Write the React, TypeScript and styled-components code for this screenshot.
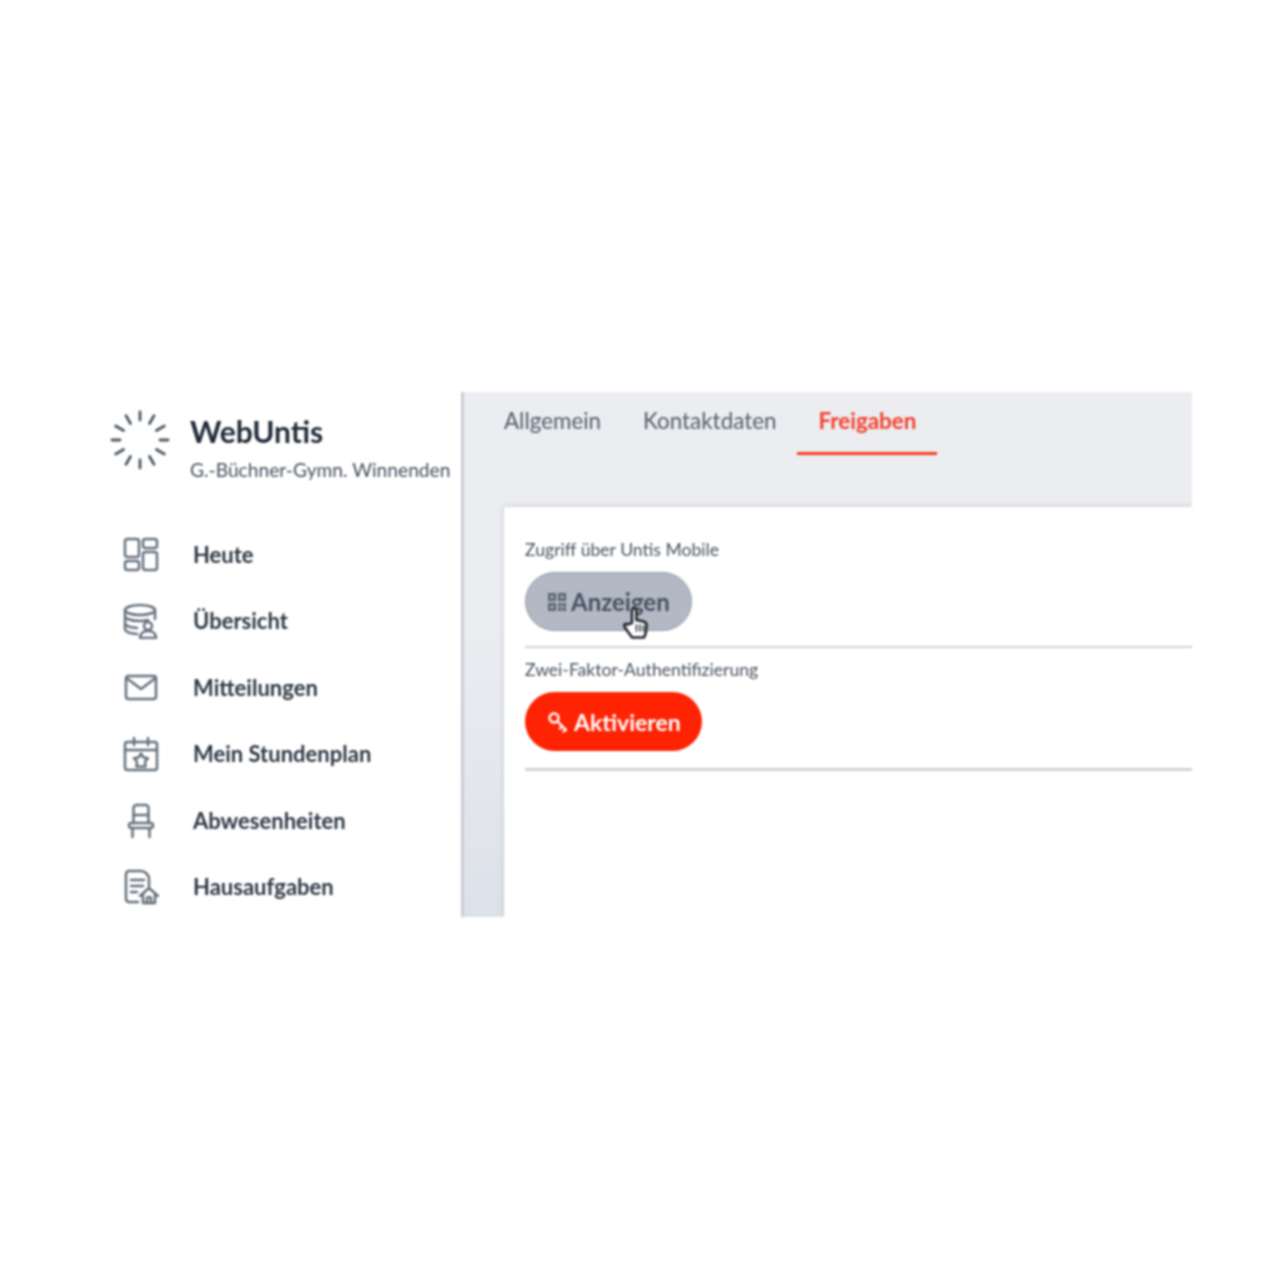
import React from 'react';
import styled, { createGlobalStyle } from 'styled-components';

const GlobalStyle = createGlobalStyle`
  html, body {
    margin: 0;
    padding: 0;
    background: #ffffff;
  }
  body {
    font-family: Lato, "Liberation Sans", sans-serif;
  }
`;

const Page = styled.div`
  width: 1280px;
  height: 1280px;
  box-sizing: border-box;
  padding: 392px 88px 0 0;
  background: #fff;
`;
const Frame = styled.div`
  display: flex;
  height: 525px;
  filter: blur(0.8px);
`;
const Sidebar = styled.div`
  width: 461px;
  flex-shrink: 0;
  box-sizing: border-box;
  padding: 18px 0 0 110px;
`;
const Brand = styled.div`
  display: flex;
  gap: 20px;
`;
const BrandText = styled.div`
  display: flex;
  flex-direction: column;
`;
const BrandTitle = styled.div`
  font-size: 30px;
  line-height: 42px;
  font-weight: 700;
  color: #1f2a36;
`;
const BrandSchool = styled.div`
  margin-top: 6px;
  font-size: 19.2px;
  line-height: 24px;
  color: #434f5c;
  white-space: nowrap;
`;
const Nav = styled.div`
  display: flex;
  flex-direction: column;
  margin-top: 39px;
  padding-left: 13px;
`;
const NavItem = styled.div`
  display: flex;
  align-items: center;
  gap: 34px;
  height: 66.5px;
  font-size: 22px;
  font-weight: 700;
  color: #2c3743;
  white-space: nowrap;
`;
const NavIcon = styled.svg`
  width: 36px;
  height: 36px;
  flex-shrink: 0;
  margin-top: 1px;
  fill: none;
  stroke: #65717d;
  stroke-width: 2.5;
  stroke-linecap: round;
  stroke-linejoin: round;
`;
const Main = styled.div`
  flex: 1;
  display: flex;
  flex-direction: column;
  min-width: 0;
  overflow: hidden;
  background: linear-gradient(to bottom, #ebedf1 0, #ebedf1 45%, #dde1e9 100%);
  border-left: 3px solid #c9cdd5;
`;
const Tabs = styled.div`
  display: flex;
  height: 115px;
  padding-left: 19px;
  box-sizing: border-box;
  align-items: flex-start;
`;
const Tab = styled.div<{ $active?: boolean }>`
  box-sizing: border-box;
  height: 63px;
  padding: 14px 21px 0;
  font-size: 22.4px;
  line-height: 30px;
  color: ${(p) => (p.$active ? '#f4402c' : '#525d69')};
  font-weight: ${(p) => (p.$active ? 700 : 400)};
  border-bottom: 3px solid ${(p) => (p.$active ? '#fa3a1e' : 'transparent')};
`;
const Card = styled.div`
  flex: 1;
  margin-left: 40px;
  background: #fff;
  box-sizing: border-box;
  padding: 32px 0 0 21px;
  box-shadow: -1px -1px 4px rgba(150, 158, 172, 0.35);
`;
const Section = styled.div<{ $thin?: boolean }>`
  border-bottom: ${(p) => (p.$thin ? 2 : 3)}px solid #d0d2d6;
  padding-bottom: ${(p) => (p.$thin ? 15 : 17)}px;
  margin-bottom: 11px;
`;
const SectionLabel = styled.div`
  font-size: 17.6px;
  line-height: 22px;
  color: #47525e;
  margin-bottom: 11px;
`;
const PillButton = styled.div<{ $variant: 'muted' | 'danger' }>`
  position: relative;
  display: inline-flex;
  align-items: center;
  justify-content: center;
  gap: 5px;
  height: 59px;
  box-sizing: border-box;
  padding: 0 21px 0 22px;
  border-radius: 30px;
  font-size: ${(p) => (p.$variant === 'danger' ? 23 : 24)}px;
  font-weight: 700;
  vertical-align: top;
  color: ${(p) => (p.$variant === 'danger' ? '#ffffff' : '#465160')};
  background: ${(p) => (p.$variant === 'danger' ? '#fe2303' : '#b2b8c4')};
  border: ${(p) => (p.$variant === 'danger' ? 'none' : '1px solid #959ca9')};
`;
const HandCursor = styled.svg`
  position: absolute;
  left: 97px;
  top: 33px;
  width: 26px;
  height: 34px;
`;

const Logo = () => {
  const rays = Array.from({ length: 12 }, (_, i) => i * 30);
  return (
    <svg width="60" height="60" viewBox="0 0 60 60" style={{ flexShrink: 0 }}>
      {rays.map((deg) => (
        <line
          key={deg}
          x1="30"
          y1="2"
          x2="30"
          y2={deg % 90 === 0 ? '10' : '11'}
          stroke="#4c5763"
          strokeWidth="2.8"
          strokeLinecap="round"
          transform={`rotate(${deg} 30 30)`}
        />
      ))}
    </svg>
  );
};

const IconToday = () => (
  <NavIcon viewBox="0 0 36 36">
    <rect x="2" y="2" width="14" height="18" rx="2.5" />
    <rect x="20" y="2" width="14" height="9" rx="2.5" />
    <rect x="2" y="24" width="14" height="9" rx="2.5" />
    <rect x="20" y="15" width="14" height="18" rx="2.5" />
  </NavIcon>
);
const IconOverview = () => (
  <NavIcon viewBox="0 0 36 36">
    <ellipse cx="17" cy="7" rx="15" ry="5" />
    <path d="M2 7v19c0 2.600 5 4.600 12 5M32 7v9M2 13c0 2.800 6.500 5 15 5 3 0 6-.3 8-1M2 20c0 2.600 5 4.600 12 5" />
    <circle cx="25" cy="23" r="4" />
    <path d="M17 35c0-4 3-7 8-7s8 3 8 7z" />
  </NavIcon>
);
const IconMail = () => (
  <NavIcon viewBox="0 0 36 36">
    <rect x="3" y="6" width="30" height="23" rx="2.5" />
    <path d="M3.500 8L18 19L32.500 8" />
  </NavIcon>
);
const IconPlan = () => (
  <NavIcon viewBox="0 0 36 36">
    <rect x="2" y="6" width="32" height="28" rx="2.5" />
    <path d="M2 14h32M11 2v7M25 2v7" />
    <path d="M18 17.500l2.400 3.900 4.600.9-3 3.500.5 4.700h-9l.5-4.700-3-3.500 4.600-.9z" />
  </NavIcon>
);
const IconChair = () => (
  <NavIcon viewBox="0 0 36 36">
    <path d="M10.500 20V5a3 3 0 0 1 3-3h9a3 3 0 0 1 3 3v15M10.500 12h15" />
    <rect x="6" y="20" width="24" height="5" rx="2.500" />
    <path d="M9.500 25v9M26.500 25v9" />
  </NavIcon>
);
const IconHomework = () => (
  <NavIcon viewBox="0 0 36 36">
    <path d="M15 33H6a3 3 0 0 1-3-3V5a3 3 0 0 1 3-3h12c4 0 8 4 8 8v7" />
    <path d="M8 11h13M8 17h12M8 23h6" />
    <path d="M17 27l9-8 9 8M20 25v9h12v-9" />
    <path d="M24 34v-4a2 2 0 0 1 4 0v4" />
  </NavIcon>
);

const QrIcon = () => (
  <svg width="18" height="18" viewBox="0 0 18 18" fill="#5a6573">
    <path d="M0 0h8v8H0zM2.500 2.500v3h3v-3zM10 0h8v8h-8zM12.500 2.500v3h3v-3zM0 10h8v8H0zM2.500 12.500v3h3v-3z" fillRule="evenodd" />
    <path d="M10 10h3.500v3.500H10zM14.500 10H18v3.500h-3.500zM10 14.500h3.500V18H10zM14.500 14.500H18V18h-3.500z" />
  </svg>
);
const KeyIcon = () => (
  <svg width="22" height="22" viewBox="0 0 22 22" fill="none" stroke="#fff" strokeWidth="2.400" strokeLinecap="round">
    <circle cx="7" cy="7" r="4.500" />
    <path d="M10.500 10.500L19 19M15 15l-2 2.500M18.500 18.500l-2 2" />
  </svg>
);

const navItems = [
  { label: 'Heute', icon: <IconToday /> },
  { label: 'Übersicht', icon: <IconOverview /> },
  { label: 'Mitteilungen', icon: <IconMail /> },
  { label: 'Mein Stundenplan', icon: <IconPlan /> },
  { label: 'Abwesenheiten', icon: <IconChair /> },
  { label: 'Hausaufgaben', icon: <IconHomework /> },
];

const App: React.FC = () => {
  return (
    <Page>
      <GlobalStyle />
      <Frame>
        <Sidebar>
          <Brand>
            <Logo />
            <BrandText>
              <BrandTitle>WebUntis</BrandTitle>
              <BrandSchool>G.-Büchner-Gymn. Winnenden</BrandSchool>
            </BrandText>
          </Brand>
          <Nav>
            {navItems.map((item) => (
              <NavItem key={item.label}>
                {item.icon}
                {item.label}
              </NavItem>
            ))}
          </Nav>
        </Sidebar>
        <Main>
          <Tabs>
            <Tab>Allgemein</Tab>
            <Tab>Kontaktdaten</Tab>
            <Tab $active>Freigaben</Tab>
          </Tabs>
          <Card>
            <Section $thin>
              <SectionLabel>Zugriff über Untis Mobile</SectionLabel>
              <PillButton $variant="muted">
                <QrIcon />
                Anzeigen
                <HandCursor viewBox="0 0 26 34">
                  <path
                    d="M9 17V4.500a2.200 2.200 0 0 1 4.400 0V14l7 1.500c2 .5 3.100 2 3.100 4l-.5 6c-.3 2.500-1 4-2 6H9c-1-2-3-4-5-7l-2.500-4c-1-2 1.500-3.500 3-2z"
                    fill="#fff"
                    stroke="#23262c"
                    strokeWidth="2.600"
                    strokeLinejoin="round"
                  />
                  <path d="M13.500 19v6M17 19v6M20.500 20v5" stroke="#23262c" strokeWidth="1.500" strokeLinecap="round" />
                </HandCursor>
              </PillButton>
            </Section>
            <Section>
              <SectionLabel>Zwei-Faktor-Authentifizierung</SectionLabel>
              <PillButton $variant="danger">
                <KeyIcon />
                Aktivieren
              </PillButton>
            </Section>
          </Card>
        </Main>
      </Frame>
    </Page>
  );
};

export default App;
